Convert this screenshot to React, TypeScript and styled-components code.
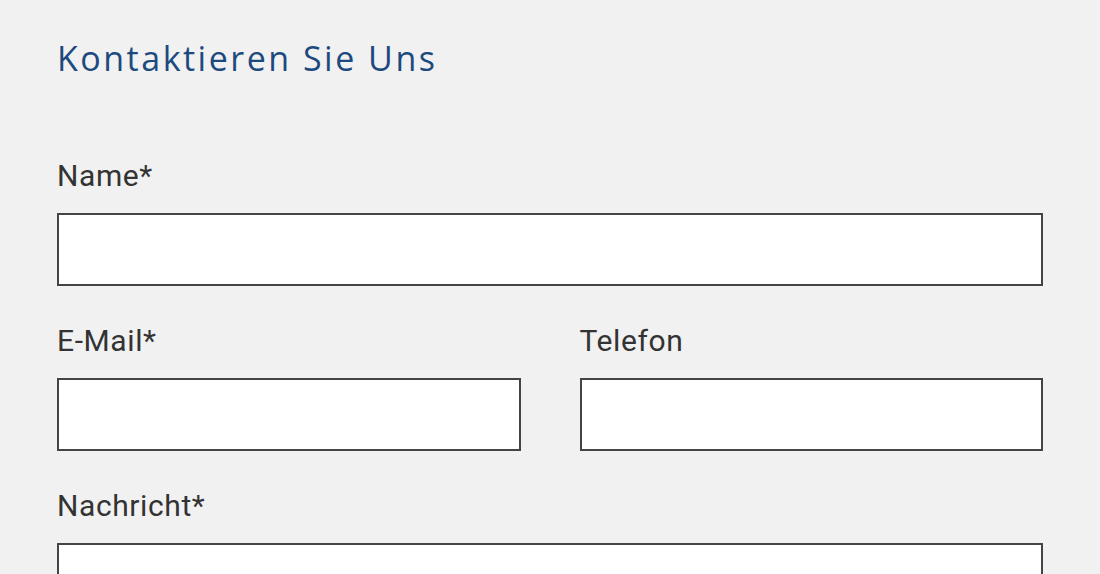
import React from "react";
import styled, { createGlobalStyle } from "styled-components";

const Global = createGlobalStyle`
  html, body { margin: 0; padding: 0; background: #f1f1f1; }
  body { font-family: Roboto, "Liberation Sans", sans-serif; }
  * { box-sizing: border-box; }
`;

const Page = styled.div`
  width: 1100px;
  height: 574px;
  overflow: hidden;
  background: #f1f1f1;
  padding: 38px 57px 0 57px;
`;

const Heading = styled.h2`
  margin: 0 0 80px 0;
  font-family: "Open Sans", sans-serif;
  font-weight: 400;
  font-size: 34px;
  line-height: 41px;
  color: #1d4a7e;
  letter-spacing: 2.5px;
`;

const Form = styled.form`
  display: flex;
  flex-direction: column;
  gap: 38px;
`;

const Row = styled.div`
  display: grid;
  grid-template-columns: 1fr 1fr;
  column-gap: 59px;
`;

const Field = styled.div`
  display: flex;
  flex-direction: column;
`;

const Label = styled.label`
  font-family: Roboto, sans-serif;
  font-size: 30px;
  line-height: 34px;
  letter-spacing: 0.6px;
  color: #333333;
  margin-bottom: 20px;
`;

const Input = styled.input`
  height: 73px;
  width: 100%;
  border: 2px solid #444444;
  background: #ffffff;
  border-radius: 0;
  font-size: 24px;
  padding: 0 14px;
  outline: none;
`;

const TextArea = styled.textarea`
  height: 160px;
  width: 100%;
  border: 2px solid #444444;
  background: #ffffff;
  border-radius: 0;
  resize: none;
  outline: none;
`;

export default function App() {
  return (
    <>
      <Global />
      <Page>
        <Heading>Kontaktieren Sie Uns</Heading>
        <Form>
          <Field>
            <Label>Name*</Label>
            <Input type="text" />
          </Field>
          <Row>
            <Field>
              <Label>E-Mail*</Label>
              <Input type="email" />
            </Field>
            <Field>
              <Label>Telefon</Label>
              <Input type="tel" />
            </Field>
          </Row>
          <Field>
            <Label>Nachricht*</Label>
            <TextArea />
          </Field>
        </Form>
      </Page>
    </>
  );
}
